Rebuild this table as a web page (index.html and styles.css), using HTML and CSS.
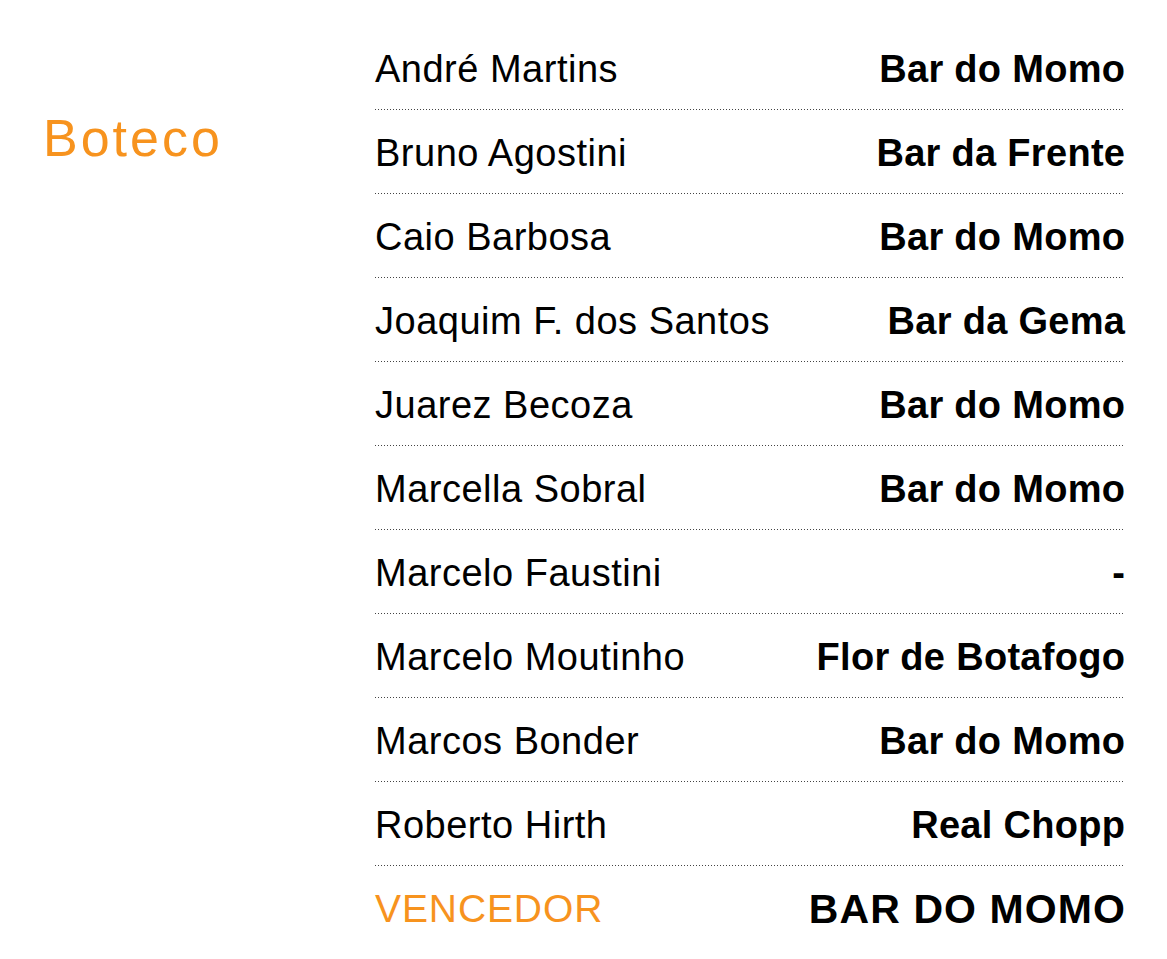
FILE: index.html
```html
<!DOCTYPE html>
<html lang="pt">
<head>
<meta charset="utf-8">
<title>Boteco</title>
<link rel="stylesheet" href="styles.css">
</head>
<body>
<div class="page">
  <div class="category">Boteco</div>
  <ul class="votes">
    <li class="row"><span class="name">André Martins</span><span class="pick">Bar do Momo</span></li>
    <li class="row"><span class="name">Bruno Agostini</span><span class="pick">Bar da Frente</span></li>
    <li class="row"><span class="name">Caio Barbosa</span><span class="pick">Bar do Momo</span></li>
    <li class="row"><span class="name">Joaquim F. dos Santos</span><span class="pick">Bar da Gema</span></li>
    <li class="row"><span class="name">Juarez Becoza</span><span class="pick">Bar do Momo</span></li>
    <li class="row"><span class="name">Marcella Sobral</span><span class="pick">Bar do Momo</span></li>
    <li class="row"><span class="name">Marcelo Faustini</span><span class="pick">-</span></li>
    <li class="row"><span class="name">Marcelo Moutinho</span><span class="pick">Flor de Botafogo</span></li>
    <li class="row"><span class="name">Marcos Bonder</span><span class="pick">Bar do Momo</span></li>
    <li class="row"><span class="name">Roberto Hirth</span><span class="pick">Real Chopp</span></li>
    <li class="row winner"><span class="name">VENCEDOR</span><span class="pick">BAR DO MOMO</span></li>
  </ul>
</div>
</body>
</html>
```

FILE: styles.css
```css
html, body {
  margin: 0;
  padding: 0;
  background: #ffffff;
}

body {
  font-family: "Liberation Sans", Arial, sans-serif;
  color: #000;
}

.page {
  display: flex;
  align-items: flex-start;
  padding: 26px 0 0 0;
}

.category {
  width: 332px;
  padding-left: 43px;
  padding-top: 83px;
  color: #f7931e;
  font-size: 52px;
  line-height: 58px;
  letter-spacing: 3px;
}

.votes {
  list-style: none;
  margin: 0;
  padding: 0;
  width: 750px;
}

.row {
  display: flex;
  justify-content: space-between;
  align-items: center;
  height: 83px;
  background-image: linear-gradient(to right, #444 1px, transparent 1px);
  background-size: 3px 1px;
  background-repeat: repeat-x;
  background-position: left bottom;
  padding-bottom: 1px;
  font-size: 38px;
  line-height: 44px;
}

.name {
  letter-spacing: 0.5px;
  padding-top: 3px;
}

.pick {
  font-weight: bold;
  letter-spacing: 0.3px;
  padding-top: 3px;
  margin-right: -0.3px;
}

.winner {
  background-image: none;
}

.winner .name {
  color: #f7931e;
  font-size: 39px;
  letter-spacing: 0.9px;
}

.winner .pick {
  font-size: 41px;
  letter-spacing: 1.1px;
  margin-right: -1.1px;
}
```
